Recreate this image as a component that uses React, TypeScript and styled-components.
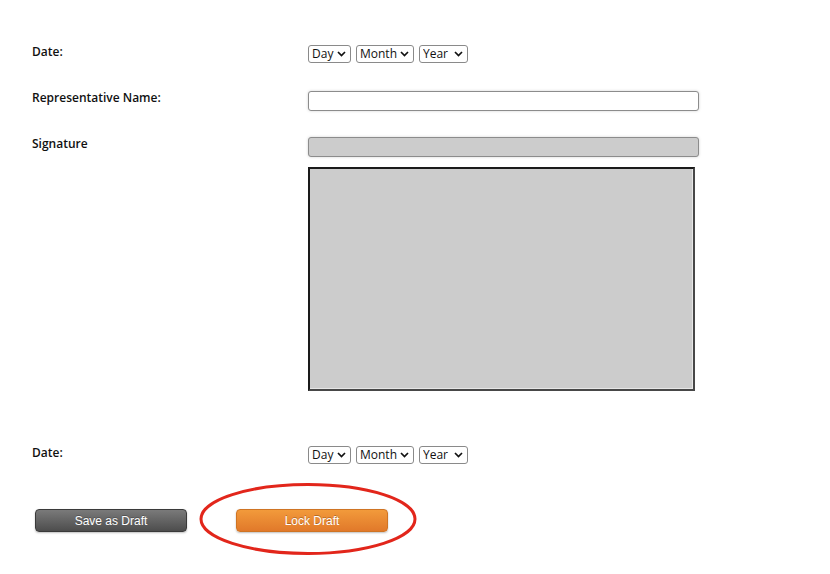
import React from 'react';
import styled, { createGlobalStyle } from 'styled-components';

// == styles =======================================================================================
const GlobalStyle = createGlobalStyle`
  html, body {
    margin: 0;
    padding: 0;
    background: #fff;
  }
`;

const Form = styled.div`
  width: 830px;
  height: 574px;
  box-sizing: border-box;
  padding: 45px 0 0 32px;
  display: flex;
  flex-direction: column;
  font-family: 'Open Sans', 'DejaVu Sans', sans-serif;
  color: #111;
`;

const Row = styled.div<{ $gap?: number }>`
  display: grid;
  grid-template-columns: 276px 1fr;
  align-items: start;
  margin-top: ${ ( p ) => p.$gap ?? 0 }px;
`;

const Label = styled.div`
  font-size: 12px;
  font-weight: 600;
  line-height: 14px;
`;

const Controls = styled.div`
  display: flex;
  flex-direction: column;
  gap: 10px;
`;

const SelectGroup = styled.div`
  display: flex;
  gap: 5px;
`;

const SelectBox = styled.label<{ $width: number }>`
  display: inline-flex;
  align-items: center;
  justify-content: space-between;
  box-sizing: border-box;
  width: ${ ( p ) => p.$width }px;
  height: 18px;
  padding: 0 4px 0 3px;
  border: 1px solid #8a8a8a;
  border-radius: 3px;
  background: #fff;
`;

const Select = styled.select`
  appearance: none;
  border: none;
  background: transparent;
  padding: 0;
  margin: 0;
  font-family: 'Open Sans', 'DejaVu Sans', sans-serif;
  font-size: 12px;
  line-height: 16px;
  color: #111;
  outline: none;
`;

const TextInput = styled.input<{ $disabled?: boolean }>`
  box-sizing: border-box;
  width: 391px;
  height: 20px;
  margin: 0;
  border: 1px solid #8c8c8c;
  border-radius: 3px;
  background: ${ ( p ) => ( p.$disabled ? '#cccccc' : '#fff' ) };
  box-shadow: 0 0 3px rgba(0, 0, 0, 0.18);
  padding: 0 4px;
  font-size: 12px;
`;

const Pad = styled.div`
  box-sizing: border-box;
  width: 387px;
  height: 224px;
  background: #cccccc;
  border: 2px solid;
  border-color: #1a1a1a #474747 #474747 #1a1a1a;
  box-shadow: inset -1px -1px 0 #e6e6e6;
`;

const ButtonRow = styled.div`
  position: relative;
  display: flex;
  gap: 49px;
  margin-top: 45px;
  margin-left: 3px;
`;

const Button = styled.button<{ $tone: 'dark' | 'orange' }>`
  box-sizing: border-box;
  width: 152px;
  height: 23px;
  border-radius: 4px;
  border: 1px solid ${ ( p ) => ( p.$tone === 'dark' ? '#3a3a3a' : '#cf7424' ) };
  background: ${ ( p ) => ( p.$tone === 'dark'
    ? 'linear-gradient(#7a7a7a, #4d4d4d)'
    : 'linear-gradient(#f29a3b, #e1792a)' ) };
  box-shadow: 0 1px 2px rgba(0, 0, 0, 0.25);
  color: #fff;
  font-family: 'Liberation Sans', Arial, sans-serif;
  font-size: 12px;
  text-shadow: 0 -1px 0 rgba(0, 0, 0, 0.25);
  padding: 0;
  cursor: pointer;
`;

const Highlight = styled.svg`
  position: absolute;
  left: 163px;
  top: -27px;
  pointer-events: none;
`;

// == element ======================================================================================
const Chevron = () => (
  <svg width="9" height="6" viewBox="0 0 9 6">
    <path d="M1 1 L4.5 4.5 L8 1" fill="none" stroke="#111" strokeWidth="1.7" />
  </svg>
);

const DateSelects = () => (
  <SelectGroup>
    { [ [ 'Day', 43 ], [ 'Month', 58 ], [ 'Year', 49 ] ].map( ( [ name, width ] ) => (
      <SelectBox key={ name } $width={ width as number }>
        <Select defaultValue="">
          <option value="">{ name }</option>
        </Select>
        <Chevron />
      </SelectBox>
    ) ) }
  </SelectGroup>
);

export default function App(): JSX.Element {
  return (
    <>
      <GlobalStyle />
      <Form>
        <Row>
          <Label>Date:</Label>
          <DateSelects />
        </Row>
        <Row $gap={ 28 }>
          <Label>Representative Name:</Label>
          <TextInput type="text" />
        </Row>
        <Row $gap={ 26 }>
          <Label>Signature</Label>
          <Controls>
            <TextInput type="text" $disabled readOnly />
            <Pad />
          </Controls>
        </Row>
        <Row $gap={ 55 }>
          <Label>Date:</Label>
          <DateSelects />
        </Row>
        <ButtonRow>
          <Button $tone="dark">Save as Draft</Button>
          <Button $tone="orange">Lock Draft</Button>
          <Highlight width="220" height="76" viewBox="0 0 220 76">
            <ellipse cx="110" cy="37" rx="107" ry="34.5" fill="none" stroke="#e2261b" strokeWidth="3" />
          </Highlight>
        </ButtonRow>
      </Form>
    </>
  );
}
